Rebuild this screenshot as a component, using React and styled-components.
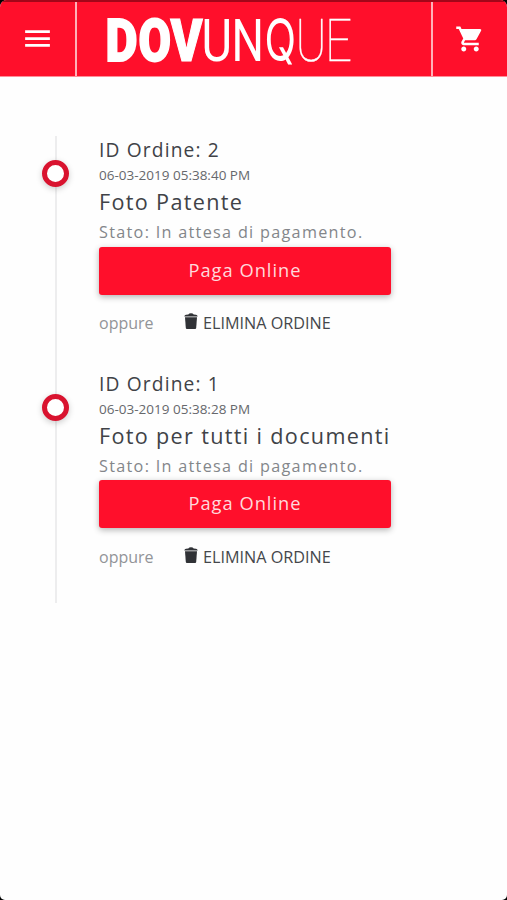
import React from 'react';
import styled, {createGlobalStyle} from "styled-components";
import {MdMenu, MdShoppingCart} from "react-icons/md";

const orders = [
    {id: 2, date: '06-03-2019 05:38:40 PM', title: 'Foto Patente'},
    {id: 1, date: '06-03-2019 05:38:28 PM', title: 'Foto per tutti i documenti'},
];

// every letter of the logo has its own width and weight
const letters = [
    {char: 'D', x: 0.5, width: 32, weight: 900, stroke: 1.8},
    {char: 'O', x: 33.5, width: 32.5, weight: 900, stroke: 1.8},
    {char: 'V', x: 65.5, width: 32, weight: 900, stroke: 1.2},
    {char: 'U', x: 96.5, width: 30.5, weight: 400, stroke: 0},
    {char: 'N', x: 126.5, width: 32.5, weight: 400, stroke: 0},
    {char: 'Q', x: 159.5, width: 31.5, weight: 400, stroke: 0},
    {char: 'U', x: 190.5, width: 31, weight: 100, stroke: 0.4},
    {char: 'E', x: 220, width: 27, weight: 100, stroke: 0.3},
];

const Logo = () => (
    <LogoSvg width="255" height="74" viewBox="0 0 255 74">
        {letters.map(({char, x, width, weight, stroke}) => (
            <Letter key={x} x={x} y="59" $char={char} fontWeight={weight} textLength={width} lengthAdjust="spacingAndGlyphs" strokeWidth={stroke}>{char}</Letter>
        ))}
    </LogoSvg>
);

const Order = ({order}) => {
    return (
        <Item>
            <Dot />
            <OrderId>ID Ordine: {order.id}</OrderId>
            <OrderDate>{order.date}</OrderDate>
            <OrderTitle>{order.title}</OrderTitle>
            <Status>Stato: In attesa di pagamento.</Status>
            <PayButton>Paga Online</PayButton>
            <ItemFooter>
                <Or>oppure</Or>
                <DeleteButton>
                    <svg width="14" height="16" viewBox="0 0 14 16" fill="#303236">
                        <path d="M0.3 3.4Q.6 2 2 1.8L4.3 1.5Q5 .2 7 .2t2.7 1.3l2.3.3q1.4.2 1.7 1.6z" />
                        <path d="M1 4.3h12L12.2 15q-.1 1-1.1 1H2.9q-1 0-1.1-1z" />
                    </svg>
                    <span>ELIMINA ORDINE</span>
                </DeleteButton>
            </ItemFooter>
        </Item>
    );
};

const App = () => {
    return (
        <Frame>
            <GlobalStyle />
            <Page>
                <Header>
                    <HeaderButton aria-label="Menu"><MdMenu size={33} /></HeaderButton>
                    <Brand><Logo /></Brand>
                    <HeaderButton aria-label="Carrello"><MdShoppingCart size={30} /></HeaderButton>
                </Header>
                <Timeline>
                    {orders.map(order => <Order key={order.id} order={order} />)}
                </Timeline>
            </Page>
        </Frame>
    );
};

export default App;

const GlobalStyle = createGlobalStyle`
    * {
        box-sizing: border-box;
        margin: 0;
        padding: 0;
    }
    body {
        font-family: "Open Sans", "Noto Sans", sans-serif;
        background: #000;
    }
`;

const Frame = styled.div`
    height: 900px;
    background: #000;
`;

const Page = styled.div`
    height: 900px;
    overflow: hidden;
    border-radius: 7px 7px 5px 5px;
    background: #fefefe;
`;

const Header = styled.header`
    display: grid;
    grid-template-columns: 75px 1fr 74px;
    height: 77px;
    background: #ff0f2b;
    border-top: 2px solid #a30619;
    border-bottom: 1px solid #ff8d98;
    color: #fff;
`;

const HeaderButton = styled.button`
    display: flex;
    align-items: center;
    justify-content: center;
    padding-bottom: 1px;
    border: 0;
    background: none;
    color: #fff;
`;

const Brand = styled.div`
    display: flex;
    align-items: flex-start;
    padding-left: 28px;
    border-left: 2px solid #ffb1b8;
    border-right: 2px solid #ffb1b8;
`;

const LogoSvg = styled.svg`
    fill: #fff;
    stroke: #fff;
`;

const Letter = styled.text`
    font-family: ${({$char}) => $char === 'Q' ? 'Inter' : 'Roboto'}, sans-serif;
    font-size: ${({$char}) => $char === 'Q' ? '58.5px' : '60px'};
`;

const Timeline = styled.main`
    margin: 59px 0 0 55px;
    border-left: 2px solid #ededee;
`;

const Item = styled.section`
    position: relative;
    display: flex;
    flex-direction: column;
    height: 233.6px;
    padding-left: 42px;
`;

const Dot = styled.i`
    position: absolute;
    left: -15px;
    top: 24px;
    width: 27px;
    height: 27px;
    border: 5.5px solid #d9132f;
    border-radius: 50%;
    background: #fff;
    box-shadow: 0 2px 6px rgba(0, 0, 0, 0.2);
`;

const OrderId = styled.h3`
    font-size: 19.2px;
    font-weight: 400;
    line-height: 28px;
    letter-spacing: 1.15px;
    color: #404247;
`;

const OrderDate = styled.p`
    font-size: 13.5px;
    line-height: 22px;
    color: #66686c;
`;

const OrderTitle = styled.h2`
    font-size: 21.6px;
    font-weight: 400;
    line-height: 32px;
    letter-spacing: 1.33px;
    color: #404247;
`;

const Status = styled.p`
    font-size: 16.2px;
    line-height: 29px;
    letter-spacing: 1.3px;
    color: #83868a;
`;

const PayButton = styled.button`
    flex: none;
    width: 292px;
    height: 48px;
    margin-top: -0.3px;
    padding-bottom: 2px;
    border: 0;
    border-radius: 3px;
    background: #ff0f2b;
    box-shadow: 0 2px 6px rgba(0, 0, 0, 0.3);
    font: 400 18.3px/46px "Open Sans", sans-serif;
    letter-spacing: 1px;
    color: #ffd9dc;
`;

const ItemFooter = styled.div`
    display: flex;
    align-items: center;
    height: 24px;
    margin-top: 16.3px;
`;

const Or = styled.span`
    width: 85px;
    font-size: 16px;
    color: #929498;
`;

const DeleteButton = styled.button`
    display: flex;
    align-items: center;
    gap: 5px;
    border: 0;
    background: none;
    font: 400 16.2px/24px "Open Sans", sans-serif;
    color: #45474b;
    >svg {
        margin-bottom: 4px;
    }
`;
